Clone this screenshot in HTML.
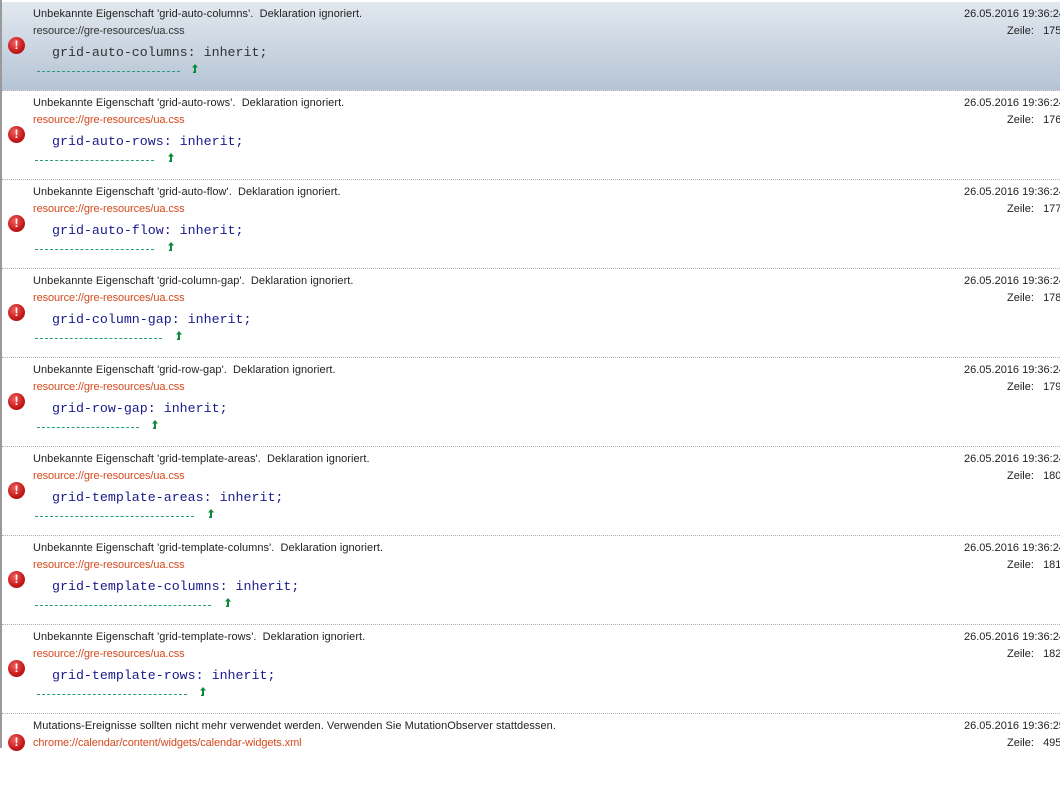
<!DOCTYPE html>
<html><head><meta charset="utf-8"><style>
body{margin:0;width:1060px;height:748px;overflow:hidden;background:#fff;font-family:"Liberation Sans",sans-serif;position:relative}
.lb{position:absolute;left:0;top:0;width:2px;height:748px;background:#9a9a9a}
.row{position:absolute;left:2px;width:1058px;height:88px;border-bottom:1px dotted #b0b0b0}
.sel{background:linear-gradient(#e2e8ef,#b5c4d5)}
.msg{position:absolute;left:31px;top:6px;font-size:11px;color:#222;white-space:nowrap;letter-spacing:0.05px}
.url{position:absolute;left:31px;top:23px;font-size:11px;color:#d4491c;white-space:nowrap;letter-spacing:-0.1px}
.sel .url{color:#333}
.code{position:absolute;left:50px;top:43px;font-family:"Liberation Mono",monospace;font-size:13.3px;color:#1a1a8c;white-space:pre}
.sel .code{color:#333}
.dash{position:absolute;top:69px;border-top:1px dashed #2a9a7a;height:0}
.arr{position:absolute;top:61px;width:8px;height:11px}
.icon{position:absolute;left:6px;top:35px;width:17px;height:17px;border-radius:50%;background:radial-gradient(circle at 40% 35%,#f06060,#c41818 60%,#9a0c0c);color:#fff;font-size:12px;font-weight:bold;text-align:center;line-height:17px}
.date{position:absolute;left:962px;top:6px;font-size:11px;color:#222;white-space:nowrap}
.z{position:absolute;left:1005px;top:23px;font-size:11px;color:#222;white-space:nowrap}
</style></head><body>
<div class="lb"></div>

<div class="row sel" style="top:2px"><div class="icon">!</div><div class="msg">Unbekannte Eigenschaft 'grid-auto-columns'.&nbsp; Deklaration ignoriert.</div><div class="url">resource://gre-resources/ua.css</div><div class="code">grid-auto-columns: inherit;</div><div class="dash" style="left:35px;width:143px"></div><svg class="arr" style="left:189px" viewBox="0 0 8 11"><path d="M4 1L1 4.5H3V8.5H2V10H5V4.5H7Z" fill="#0a8a3a"/></svg><div class="date">26.05.2016 19:36:24</div><div class="z">Zeile:&nbsp;&nbsp; 175</div></div>

<div class="row" style="top:91px"><div class="icon">!</div><div class="msg">Unbekannte Eigenschaft 'grid-auto-rows'.&nbsp; Deklaration ignoriert.</div><div class="url">resource://gre-resources/ua.css</div><div class="code">grid-auto-rows: inherit;</div><div class="dash" style="left:33px;width:119px"></div><svg class="arr" style="left:165px" viewBox="0 0 8 11"><path d="M4 1L1 4.5H3V8.5H2V10H5V4.5H7Z" fill="#0a8a3a"/></svg><div class="date">26.05.2016 19:36:24</div><div class="z">Zeile:&nbsp;&nbsp; 176</div></div>

<div class="row" style="top:180px"><div class="icon">!</div><div class="msg">Unbekannte Eigenschaft 'grid-auto-flow'.&nbsp; Deklaration ignoriert.</div><div class="url">resource://gre-resources/ua.css</div><div class="code">grid-auto-flow: inherit;</div><div class="dash" style="left:33px;width:119px"></div><svg class="arr" style="left:165px" viewBox="0 0 8 11"><path d="M4 1L1 4.5H3V8.5H2V10H5V4.5H7Z" fill="#0a8a3a"/></svg><div class="date">26.05.2016 19:36:24</div><div class="z">Zeile:&nbsp;&nbsp; 177</div></div>

<div class="row" style="top:269px"><div class="icon">!</div><div class="msg">Unbekannte Eigenschaft 'grid-column-gap'.&nbsp; Deklaration ignoriert.</div><div class="url">resource://gre-resources/ua.css</div><div class="code">grid-column-gap: inherit;</div><div class="dash" style="left:33px;width:127px"></div><svg class="arr" style="left:173px" viewBox="0 0 8 11"><path d="M4 1L1 4.5H3V8.5H2V10H5V4.5H7Z" fill="#0a8a3a"/></svg><div class="date">26.05.2016 19:36:24</div><div class="z">Zeile:&nbsp;&nbsp; 178</div></div>

<div class="row" style="top:358px"><div class="icon">!</div><div class="msg">Unbekannte Eigenschaft 'grid-row-gap'.&nbsp; Deklaration ignoriert.</div><div class="url">resource://gre-resources/ua.css</div><div class="code">grid-row-gap: inherit;</div><div class="dash" style="left:35px;width:102px"></div><svg class="arr" style="left:149px" viewBox="0 0 8 11"><path d="M4 1L1 4.5H3V8.5H2V10H5V4.5H7Z" fill="#0a8a3a"/></svg><div class="date">26.05.2016 19:36:24</div><div class="z">Zeile:&nbsp;&nbsp; 179</div></div>

<div class="row" style="top:447px"><div class="icon">!</div><div class="msg">Unbekannte Eigenschaft 'grid-template-areas'.&nbsp; Deklaration ignoriert.</div><div class="url">resource://gre-resources/ua.css</div><div class="code">grid-template-areas: inherit;</div><div class="dash" style="left:33px;width:159px"></div><svg class="arr" style="left:205px" viewBox="0 0 8 11"><path d="M4 1L1 4.5H3V8.5H2V10H5V4.5H7Z" fill="#0a8a3a"/></svg><div class="date">26.05.2016 19:36:24</div><div class="z">Zeile:&nbsp;&nbsp; 180</div></div>

<div class="row" style="top:536px"><div class="icon">!</div><div class="msg">Unbekannte Eigenschaft 'grid-template-columns'.&nbsp; Deklaration ignoriert.</div><div class="url">resource://gre-resources/ua.css</div><div class="code">grid-template-columns: inherit;</div><div class="dash" style="left:33px;width:176px"></div><svg class="arr" style="left:222px" viewBox="0 0 8 11"><path d="M4 1L1 4.5H3V8.5H2V10H5V4.5H7Z" fill="#0a8a3a"/></svg><div class="date">26.05.2016 19:36:24</div><div class="z">Zeile:&nbsp;&nbsp; 181</div></div>

<div class="row" style="top:625px"><div class="icon">!</div><div class="msg">Unbekannte Eigenschaft 'grid-template-rows'.&nbsp; Deklaration ignoriert.</div><div class="url">resource://gre-resources/ua.css</div><div class="code">grid-template-rows: inherit;</div><div class="dash" style="left:35px;width:150px"></div><svg class="arr" style="left:197px" viewBox="0 0 8 11"><path d="M4 1L1 4.5H3V8.5H2V10H5V4.5H7Z" fill="#0a8a3a"/></svg><div class="date">26.05.2016 19:36:24</div><div class="z">Zeile:&nbsp;&nbsp; 182</div></div>

<div class="row" style="top:714px;border:none"><div class="icon" style="top:20px">!</div><div class="msg">Mutations-Ereignisse sollten nicht mehr verwendet werden. Verwenden Sie MutationObserver stattdessen.</div><div class="url">chrome://calendar/content/widgets/calendar-widgets.xml</div><div class="date">26.05.2016 19:36:25</div><div class="z">Zeile:&nbsp;&nbsp; 495</div></div>
</body></html>
